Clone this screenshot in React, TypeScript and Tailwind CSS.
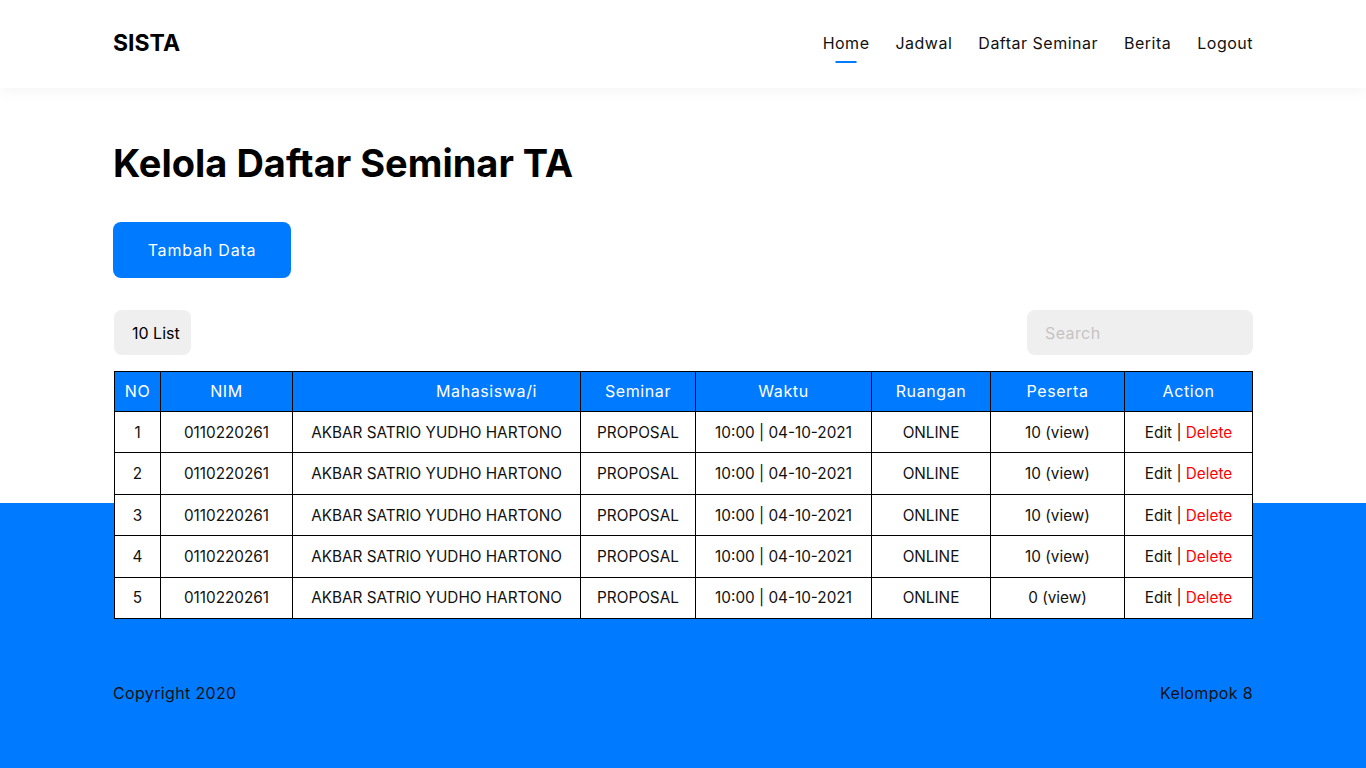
import React from "react";

const navItems = ["Home", "Jadwal", "Daftar Seminar", "Berita", "Logout"];

const rows = [
  { no: 1, peserta: 10 },
  { no: 2, peserta: 10 },
  { no: 3, peserta: 10 },
  { no: 4, peserta: 10 },
  { no: 5, peserta: 0 },
];

const App = () => {
  return (
    <div className="min-h-screen font-[Inter,'Noto_Sans',sans-serif] text-black bg-[linear-gradient(to_bottom,#ffffff_503px,#007bff_503px)]">
      <header className="bg-white h-[88px] shadow-[0_4px_12px_rgba(0,0,0,0.04)]">
        <div className="w-[1140px] mx-auto h-full flex items-center justify-between">
          <span className="text-[23px] font-bold -mt-[2px]">SISTA</span>
          <nav className="flex items-center gap-[26px] text-[16px] tracking-[0.5px] -mt-[2px]">
            {navItems.map((item, i) => (
              <a key={item} href="#" className="relative text-[#111]">
                {item}
                {i === 0 && (
                  <span className="absolute left-1/2 -translate-x-1/2 top-[30px] w-[21px] h-[2px] bg-[#007bff]" />
                )}
              </a>
            ))}
          </nav>
        </div>
      </header>

      <main className="w-[1140px] mx-auto pt-[51px]">
        <h1 className="text-[38px] leading-[48px] font-bold">
          Kelola Daftar Seminar TA
        </h1>

        <button className="mt-[35px] w-[178px] h-[56px] rounded-lg bg-[#007bff] text-white text-[16px] tracking-[0.8px]">
          Tambah Data
        </button>

        <div className="mt-[32px] flex items-center justify-between">
          <div className="ml-px h-[45px] w-[77px] rounded-lg bg-[#efefef] flex items-center pl-[18px] text-[16px]">
            10 List
          </div>
          <input
            type="text"
            placeholder="Search"
            className="h-[45px] w-[226px] rounded-lg bg-[#efefef] px-[18px] text-[16px] tracking-[0.4px] outline-none placeholder:text-[#c4c4c4]"
          />
        </div>

        <table className="mt-[16px] ml-px w-[1138px] table-fixed border-collapse text-[15.3px] bg-white">
          <colgroup>
            <col className="w-[46px]" />
            <col className="w-[132px]" />
            <col className="w-[288px]" />
            <col className="w-[115px]" />
            <col className="w-[176px]" />
            <col className="w-[119px]" />
            <col className="w-[134px]" />
            <col className="w-[128px]" />
          </colgroup>
          <thead>
            <tr className="bg-[#007bff] text-white h-[40px] text-[16px] tracking-[0.6px]">
              <th className="border border-black font-normal pb-px">NO</th>
              <th className="border border-black font-normal pb-px">NIM</th>
              <th className="border border-black font-normal pb-px pl-[100px]">Mahasiswa/i</th>
              <th className="border border-black font-normal pb-px">Seminar</th>
              <th className="border border-black font-normal pb-px">Waktu</th>
              <th className="border border-black font-normal pb-px">Ruangan</th>
              <th className="border border-black font-normal pb-px">Peserta</th>
              <th className="border border-black font-normal pb-px">Action</th>
            </tr>
          </thead>
          <tbody className="text-[#111]">
            {rows.map((r) => (
              <tr key={r.no} className="h-[41.4px] text-center">
                <td className="border border-black pt-[2px]">{r.no}</td>
                <td className="border border-black pt-[2px]">0110220261</td>
                <td className="border border-black pt-[2px] whitespace-nowrap">AKBAR SATRIO YUDHO HARTONO</td>
                <td className="border border-black pt-[2px]">PROPOSAL</td>
                <td className="border border-black pt-[2px]">10:00 | 04-10-2021</td>
                <td className="border border-black pt-[2px]">ONLINE</td>
                <td className="border border-black pt-[2px]">{r.peserta} (view)</td>
                <td className="border border-black pt-[2px]">
                  Edit | <span className="text-[#ff0000]">Delete</span>
                </td>
              </tr>
            ))}
          </tbody>
        </table>
      </main>

      <footer className="w-[1140px] mx-auto mt-[62px] flex items-center justify-between text-[16px] leading-[24px] tracking-[0.35px] text-[#111]">
        <span>Copyright 2020</span>
        <span>Kelompok 8</span>
      </footer>
    </div>
  );
};

export default App;
